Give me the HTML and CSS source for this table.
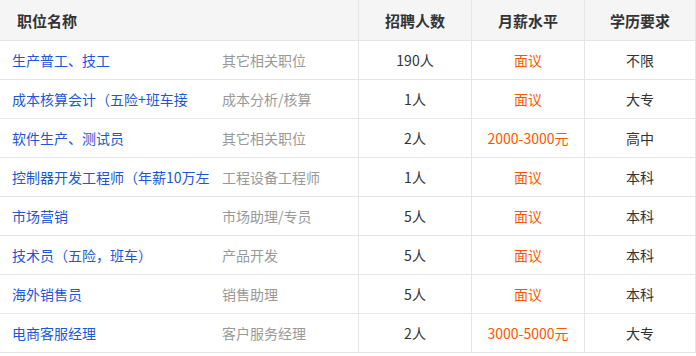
FILE: index.html
```html
<!DOCTYPE html>
<html lang="zh">
<head>
<meta charset="utf-8">
<link rel="stylesheet" href="styles.css">
</head>
<body>
<div class="jobs">
  <div class="row head">
    <div class="c c-title">职位名称</div>
    <div class="c c-num">招聘人数</div>
    <div class="c c-num">月薪水平</div>
    <div class="c c-num c-last">学历要求</div>
  </div>
  <div class="row">
    <div class="c c-title"><a class="name">生产普工、技工</a><span class="cat">其它相关职位</span></div>
    <div class="c c-num">190人</div>
    <div class="c c-num pay">面议</div>
    <div class="c c-num c-last">不限</div>
  </div>
  <div class="row">
    <div class="c c-title"><a class="name">成本核算会计（五险+班车接</a><span class="cat">成本分析/核算</span></div>
    <div class="c c-num">1人</div>
    <div class="c c-num pay">面议</div>
    <div class="c c-num c-last">大专</div>
  </div>
  <div class="row">
    <div class="c c-title"><a class="name">软件生产、测试员</a><span class="cat">其它相关职位</span></div>
    <div class="c c-num">2人</div>
    <div class="c c-num pay">2000-3000元</div>
    <div class="c c-num c-last">高中</div>
  </div>
  <div class="row">
    <div class="c c-title"><a class="name">控制器开发工程师（年薪10万左</a><span class="cat">工程设备工程师</span></div>
    <div class="c c-num">1人</div>
    <div class="c c-num pay">面议</div>
    <div class="c c-num c-last">本科</div>
  </div>
  <div class="row">
    <div class="c c-title"><a class="name">市场营销</a><span class="cat">市场助理/专员</span></div>
    <div class="c c-num">5人</div>
    <div class="c c-num pay">面议</div>
    <div class="c c-num c-last">本科</div>
  </div>
  <div class="row">
    <div class="c c-title"><a class="name">技术员（五险，班车）</a><span class="cat">产品开发</span></div>
    <div class="c c-num">5人</div>
    <div class="c c-num pay">面议</div>
    <div class="c c-num c-last">本科</div>
  </div>
  <div class="row">
    <div class="c c-title"><a class="name">海外销售员</a><span class="cat">销售助理</span></div>
    <div class="c c-num">5人</div>
    <div class="c c-num pay">面议</div>
    <div class="c c-num c-last">本科</div>
  </div>
  <div class="row">
    <div class="c c-title"><a class="name">电商客服经理</a><span class="cat">客户服务经理</span></div>
    <div class="c c-num">2人</div>
    <div class="c c-num pay">3000-5000元</div>
    <div class="c c-num c-last">大专</div>
  </div>
</div>
</body>
</html>
```
FILE: styles.css
```css
html, body {
  margin: 0;
  padding: 0;
  background: #fff;
}
body {
  font-family: "Noto Sans CJK SC", "Liberation Sans", sans-serif;
  font-size: 14px;
  color: #333;
}
.jobs {
  width: 696px;
}
.row {
  display: grid;
  grid-template-columns: 358px 113px 113px 112px;
  height: 39px;
  box-sizing: border-box;
  border-bottom: 1px solid #e5e5e5;
}
.row.head {
  height: 41px;
  background: #f5f5f5;
  font-weight: bold;
  font-size: 15px;
}
.c {
  display: flex;
  align-items: center;
  white-space: nowrap;
  overflow: hidden;
}
.c-num {
  justify-content: center;
  border-left: 1px solid #e5e5e5;
}
.c-last {
  border-right: 1px solid #e5e5e5;
}
.head .c-title {
  padding-left: 17px;
}
.c-title {
  padding-left: 12px;
}
.name {
  color: #2056d8;
  width: 210px;
  overflow: hidden;
  white-space: nowrap;
  text-decoration: none;
}
.cat {
  color: #999;
}
.pay {
  color: #ff5500;
}
```
